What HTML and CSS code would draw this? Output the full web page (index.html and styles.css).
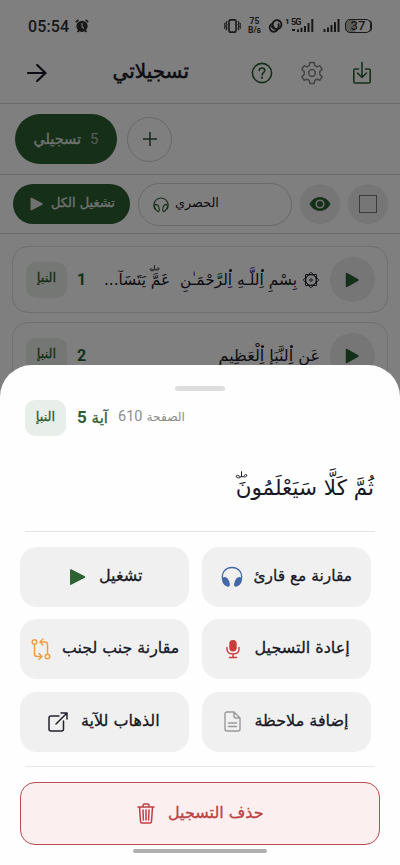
FILE: index.html
```html
<!DOCTYPE html>
<html lang="ar">
<head>
<meta charset="utf-8">
<meta name="viewport" content="width=device-width, initial-scale=1">
<title>تسجيلاتي</title>
<link rel="stylesheet" href="styles.css">
</head>
<body>
<div class="phone">
  <div class="status">
    <span class="clock">05:54</span>
    <svg class="alarm" width="14" height="14" viewBox="0 0 14 14"><circle cx="7" cy="7.300" r="5.600" fill="#303030"/><path d="M.8 3.200 3.400.9M13.200 3.200 10.600.9M2.500 13l1.600-1.800M11.500 13l-1.600-1.800" stroke="#303030" stroke-width="1.700"/><path d="M7 4v3.600l2 1.800" fill="none" stroke="#ddd" stroke-width="1.300"/></svg>
    <svg class="vibrate" width="17" height="14" viewBox="0 0 17 14" fill="none" stroke="#303030"><rect x="5" y=".9" width="7" height="12.200" rx="1.400" stroke-width="1.600"/><path d="M3 2 2 4l1 1.700L2 7.400l1 1.800-1 2M.8 4v6M14 2l1 2-1 1.700 1 1.700-1 1.800 1 2M16.200 4v6" stroke-width="1.100"/></svg>
    <span class="speed"><b>75</b><b>B/s</b></span>
    <svg class="link" width="17" height="14" viewBox="0 0 17 14" fill="none" stroke="#303030" stroke-width="1.900" stroke-linecap="round"><path d="M5.500 4.600a4.200 4.200 0 1 0 4.800 6.400"/><path d="M7 8.800a4.400 4.400 0 1 1 4.200 1C8.500 10.500 5.500 9.500 5 7.500"/><path d="M11.600 5.200c.6 3-.8 5-2.600 6"/></svg>
    <span class="sim">1</span>
    <span class="net"><b>5G</b><svg width="23" height="14" viewBox="0 0 23 14" fill="#303030"><path d="M1 10h3v2H1zM6 10.500h2V13H6zM9.500 8.800h2V13h-2zM13 7h2v6h-2zM16.500 4h2v9h-2zM20.300 0h2v13h-2z"/></svg></span>
    <svg class="signal" width="17" height="14" viewBox="0 0 17 14" fill="#303030"><path d="M.5 10h2v3h-2zM4 8.500h2V13H4zM7.500 6h2v7h-2zM11 3.200h2V13h-2zM14.500 0h2v13h-2z"/></svg>
    <span class="battery">37</span>
  </div>
  <div class="header">
    <svg class="back" width="20" height="20" viewBox="0 0 20 20" fill="none" stroke="#181825" stroke-width="2.200" stroke-linecap="round" stroke-linejoin="round"><path d="M1 10h17.500M10.200 2l8.300 8-8.300 8"/></svg>
    <h1 dir="rtl">تسجيلاتي</h1>
    <svg class="help" width="22" height="22" viewBox="0 0 22 22" fill="none" stroke="#2d5f33" stroke-width="1.600" stroke-linecap="round"><circle cx="11" cy="11" r="9.600"/><path d="M8.200 8.400C8.300 6.700 9.500 6 11 6s2.800.9 2.800 2.500c0 2-2.700 2.200-2.700 4.500"/><circle cx="11" cy="15.800" r=".4"/></svg>
    <svg class="gear" width="24" height="24" viewBox="0 0 24 24" fill="none" stroke="#888" stroke-width="1.500" stroke-linejoin="round"><circle cx="12" cy="12" r="3.400"/><path d="M9.900 1.500h4.200l.6 3 2.300 1.300 3-1 2.100 3.600-2.300 2.100v3l2.300 2.100-2.100 3.600-3-1-2.300 1.300-.6 3H9.900l-.6-3L7 18.200l-3 1-2.100-3.600 2.300-2.100v-3L1.900 8.400 4 4.800l3 1 2.300-1.300z"/></svg>
    <svg class="save" width="20" height="24" viewBox="0 0 20 24" fill="none" stroke="#2d5f33" stroke-width="1.600" stroke-linecap="round" stroke-linejoin="round"><path d="M6.500 8H3.300Q1.800 8 1.800 9.500v11q0 1.500 1.500 1.500h13.400q1.500 0 1.500-1.500v-11Q18.200 8 16.700 8h-3.200M10 1.500v15M5.500 12l4.500 4.500 4.500-4.500"/></svg>
  </div>
  <div class="tabs">
    <div class="tab"><span class="name" dir="rtl">تسجيلي</span><span class="count">5</span></div>
    <div class="add"><svg width="16" height="16" viewBox="0 0 16 16" stroke="#2d4a35" stroke-width="1.500"><path d="M8 1v14M1 8h14"/></svg></div>
  </div>
  <div class="tools">
    <div class="playall"><svg width="13" height="14" viewBox="0 0 13 14"><path d="M1.300 1.300v11.400L12 7z" fill="#dfe5df" stroke="#dfe5df" stroke-width="1.500" stroke-linejoin="round"/></svg><span class="semi" dir="rtl">تشغيل الكل</span></div>
    <div class="reciter"><svg width="16" height="17" viewBox="0 0 16 17" fill="none" stroke="#2d5f33" stroke-width="1.100"><path d="M2.200 13.500A7.200 7.200 0 1 1 13.800 13.500"/><path d="M2.200 8.500C.3 10.500 3 15 5.200 15.600 7.700 15 5.600 7.300 2.200 8.500zM13.800 8.500c1.900 2-.8 6.500-3 7.100-2.500-.6-.4-8.300 3-7.100z"/></svg><span dir="rtl">الحصري</span></div>
    <div class="round"><svg width="22" height="16" viewBox="0 0 22 16"><path d="M.5 8Q4.200 1 11 1t10.500 7Q17.800 15 11 15T.5 8z" fill="#2d5f33"/><circle cx="11" cy="8" r="3.800" fill="#2d5f33" stroke="#ddd" stroke-width="1.600"/></svg></div>
    <div class="round"><span class="check"></span></div>
  </div>
  <div class="list">
    <div class="card"><span class="badge semi" dir="rtl">النبإ</span><b class="num">1</b><span class="ayah first" dir="rtl">بِسْمِ اِ<i class="dot"></i>للَّـهِ اِ<i class="dot"></i>لرَّحْمَـٰنِ&nbsp; عَمَّ<i class="waqf"><svg width="11" height="8" viewBox="0 0 12 8"><path d="M11 4.500C10 3 8.500 5 7.500 6c1.500.6 3.500.2 3.500-1.500M7.500 6H6V1M6 6Q4.500 6.500 4 5.500 2 4 1 5.500 1 7.500 5 7"/></svg></i> يَتَسَآ...</span><svg class="rub" width="18" height="18" viewBox="0 0 18 18" fill="none" stroke="#181825" stroke-width=".9"><path d="M3.500 3.500h11v11h-11zM9 1.200l7.800 7.800L9 16.800 1.200 9z"/><circle cx="9" cy="9" r="5.300" fill="#fefefe"/><circle cx="9" cy="9" r="1.300"/></svg><div class="play"><svg width="14" height="16" viewBox="0 0 14 16"><path d="M1.500 1.500v13L13 8z" fill="#2d5f33" stroke="#2d5f33" stroke-width="1.500" stroke-linejoin="round"/></svg></div></div>
    <div class="card"><span class="badge semi" dir="rtl">النبإ</span><b class="num">2</b><span class="ayah second" dir="rtl">عَنِ اِ<i class="dot"></i>لنَّبَإِ اِ<i class="dot"></i>لْعَظِيمِ</span><div class="play"><svg width="14" height="16" viewBox="0 0 14 16"><path d="M1.500 1.500v13L13 8z" fill="#2d5f33" stroke="#2d5f33" stroke-width="1.500" stroke-linejoin="round"/></svg></div></div>
  </div>
  <div class="scrim"></div>
  <div class="sheet">
    <div class="handle"></div>
    <div class="meta"><span class="badge semi" dir="rtl">النبإ</span><span class="aya semi" dir="rtl">آية <b>5</b></span><span class="page" dir="rtl">الصفحة <b>610</b></span></div>
    <div class="verse" dir="rtl"><span>ثُمَّ كَلَّا سَيَعْلَمُونَ<i class="waqf big"><svg width="13" height="9" viewBox="0 0 12 8"><path d="M11 4.500C10 3 8.500 5 7.500 6c1.500.6 3.500.2 3.500-1.500M7.500 6H6V1M6 6Q4.500 6.500 4 5.500 2 4 1 5.500 1 7.500 5 7"/></svg></i></span></div>
    <div class="actions">
      <div class="btn b1"><svg width="17" height="18" viewBox="0 0 17 18"><path d="M1.800 1.800v14.400L15.500 9z" fill="#2d6233" stroke="#2d6233" stroke-width="1.500" stroke-linejoin="round"/></svg><span dir="rtl">تشغيل</span></div>
      <div class="btn b2"><svg width="22" height="22" viewBox="0 0 22 22"><path d="M2 14.500C-.5 7 4.500 1.500 11 1.500S22.500 7 20 14.500" fill="none" stroke="#4468a5" stroke-width="1.300"/><path d="M1.300 12c2-2 4.700-1 6 1.500 1.300 2.600 2.500 6.300.7 7-2.500.9-8-3-6.700-8.500zM20.700 12c-2-2-4.700-1-6 1.500-1.300 2.600-2.500 6.300-.7 7 2.500.9 8-3 6.700-8.500z" fill="#4468a5"/></svg><span dir="rtl">مقارنة مع قارئ</span></div>
      <div class="btn b3"><svg width="20" height="22" viewBox="0 0 20 22" fill="none" stroke="#eaa04a" stroke-width="1.500" stroke-linecap="round" stroke-linejoin="round"><circle cx="3.500" cy="4" r="2.300"/><circle cx="16.500" cy="18.500" r="2.300"/><path d="M3.500 6.500V16q0 2.500 2.500 2.500h4.500M8 15.500l3 3-3 3M16.500 16V6.500Q16.500 4 14 4H9.500M12 1 9 4l3 3"/></svg><span dir="rtl">مقارنة جنب لجنب</span></div>
      <div class="btn b4"><svg width="14" height="20" viewBox="0 0 14 20"><rect x="3.300" y="1" width="7.400" height="11.500" rx="3.700" fill="#c93c38"/><path d="M1 8.500V10q0 5 6 5t6-5V8.500M7 15v3.500M3.500 18.500h7" fill="none" stroke="#c93c38" stroke-width="1.400" stroke-linecap="round"/></svg><span dir="rtl">إعادة التسجيل</span></div>
      <div class="btn b5"><svg width="20" height="20" viewBox="0 0 20 20" fill="none" stroke="#22222c" stroke-width="1.500" stroke-linecap="round" stroke-linejoin="round"><path d="M11 4H3Q1 4 1 6v11q0 2 2 2h10.500q2 0 2-2V9M8 12 19 1M13 1h6v6"/></svg><span dir="rtl">الذهاب للآية</span></div>
      <div class="btn b6"><svg width="17" height="21" viewBox="0 0 17 21" fill="none" stroke="#999" stroke-width="1.400" stroke-linecap="round" stroke-linejoin="round"><path d="M10 1H3Q1 1 1 3v15q0 2 2 2h11q2 0 2-2V7zM10 1v4q0 2 2 2h4M4.500 12h8M4.500 15.500h8"/></svg><span dir="rtl">إضافة ملاحظة</span></div>
    </div>
    <div class="delete"><svg width="18" height="21" viewBox="0 0 18 21" fill="none" stroke="#bd4141" stroke-width="1.500" stroke-linecap="round" stroke-linejoin="round"><path d="M1 4h16M6 3.800V2.500Q6 1 7.500 1h3Q12 1 12 2.500v1.300M2.500 4l1 14.500q.1 1.500 1.500 1.500h8q1.400 0 1.500-1.500L15.500 4M6 7l.4 10M9 7v10M12 7l-.4 10"/></svg><span dir="rtl">حذف التسجيل</span></div>
    <div class="navbar"></div>
  </div>
</div>
</body>
</html>
```

FILE: styles.css
```css
* { box-sizing: border-box; }
body { margin: 0; background: #fff; font-family: "DejaVu Sans", sans-serif; color: #181825; }
svg { flex: none; display: block; }
span { white-space: nowrap; flex: none; }
.phone { position: relative; width: 400px; height: 865px; overflow: hidden; background: #fefefe; }
.status { display: flex; align-items: center; height: 52px; padding: 0 0 0 28px; font-family: Roboto, sans-serif; color: #303030; }
.clock { font-size: 16px; font-weight: 500; width: 41px; letter-spacing: .1px; }
.alarm { margin-left: 6px; }
.vibrate { margin-left: 135px; }
.speed { display: flex; flex-direction: column; align-items: center; width: 15px; margin-left: 6px; font-size: 8.500px; line-height: 9px; }
.link { margin-left: 5px; }
.sim { font-size: 8px; font-weight: 700; margin: -10px 0 0 1px; width: 5px; }
.net { position: relative; margin-left: 1px; }
.net b { position: absolute; left: 0; top: -2px; font-size: 9px; line-height: 10px; letter-spacing: -.8px; }
.signal { margin-left: 9px; }
.battery { width: 26px; height: 14px; margin-left: 5px; border: 1.500px solid #303030; border-radius: 5px; background: linear-gradient(90deg, #bbb 37%, #fff 37%); font: 500 13px/12px Roboto, sans-serif; text-align: center; box-shadow: 2px 0 0 -1px #303030; }
.header { display: flex; align-items: center; height: 52px; padding-bottom: 10px; border-bottom: 1px solid #d6d6d6; }
.back { margin-left: 27px; flex: none; }
h1 { flex: none; margin: -4px 0 0 64px; width: 78px; font-size: 20px; line-height: 30px; font-weight: 400; white-space: nowrap; -webkit-text-stroke: .5px; }
.help { margin-left: 62px; }
.gear { margin-left: 27px; }
.save { margin-left: 28px; }
.tabs { display: flex; align-items: center; height: 71px; gap: 10px; padding-left: 15px; border-bottom: 1px solid #d6d6d6; }
.tab { display: flex; align-items: center; width: 102px; height: 50px; padding-left: 19px; border-radius: 25px; background: #2d5f33; color: #dfe5df; }
.tab .name { width: 47px; font-size: 14.500px; -webkit-text-stroke: .3px; }
.tab .count { margin-left: 9px; font: 15px Roboto, sans-serif; color: #a5b8a8; }
.add { display: flex; align-items: center; justify-content: center; width: 45px; height: 45px; border: 1px solid #d2d2d2; border-radius: 50%; }
.semi { -webkit-text-stroke: .3px; }
.tools { display: flex; align-items: center; height: 59px; padding-left: 13px; border-bottom: 1px solid #d6d6d6; }
.playall { display: flex; align-items: center; width: 117px; height: 40px; padding-left: 17px; gap: 8px; border-radius: 20px; background: #2d5f33; color: #dfe5df; font-size: 13px; }
.playall span, .reciter span { margin-top: -3px; }
.reciter { display: flex; align-items: center; width: 154px; height: 43px; margin-left: 8px; padding-left: 14px; gap: 6px; border: 1px solid #d2d2d2; border-radius: 22px; font-size: 12.800px; }
.round { display: flex; align-items: center; justify-content: center; width: 40px; height: 40px; margin-left: 8px; border-radius: 50%; background: #ececec; }
.check { width: 18px; height: 18px; border: 1.500px solid #777; }
.list { display: flex; flex-direction: column; gap: 9px; padding: 12px 12px; }
.card { display: flex; align-items: center; height: 67px; padding: 0 12px 0 13px; border: 1px solid #dedede; border-radius: 16px; }
.badge { display: flex; align-items: center; justify-content: center; width: 41px; height: 36px; padding-bottom: 4px; border-radius: 10px; background: #e8eee9; color: #2d5f33; font-size: 13px; flex: none; }
.num { margin-left: 10px; font: 700 16px Roboto, sans-serif; color: #2d5f33; flex: none; }
.ayah { margin-left: auto; font-size: 16px; }
.first { font-size: 15.400px; }
.dot { display: inline-block; position: relative; width: 0; height: 1px; }
.dot::before { content: ""; position: absolute; left: 1px; bottom: 13px; width: 3px; height: 3px; border-radius: 50%; background: #181825; }
.waqf { display: inline-block; position: relative; width: 0; height: 1px; }
.waqf svg { position: absolute; left: -2px; bottom: 13px; fill: none; stroke: #181825; stroke-width: .9; }
.waqf.big svg { left: -1px; bottom: 16px; }
.rub { margin: 0 0 0 5px; }
.play { display: flex; flex: none; align-items: center; justify-content: center; width: 45px; height: 45px; margin-left: 10px; padding-right: 1px; border-radius: 50%; background: #ececec; }
.scrim { position: absolute; inset: 0; background: rgba(0, 0, 0, .5); }
.sheet { position: absolute; left: 0; right: 0; top: 365px; height: 500px; border-radius: 32px 32px 0 0; background: #fefefe; padding-top: 21px; }
.handle { width: 50px; height: 5px; margin: 0 auto; border-radius: 3px; background: #ddd; }
.meta { display: flex; align-items: center; height: 36px; margin: 9px 0 0 25px; }
.aya { width: 32px; margin: -3px 0 0 10px; font-size: 15px; color: #2d5f33; }
.aya b { font: 700 17px Roboto, sans-serif; -webkit-text-stroke: 0; }
.page { width: 66px; margin: -3px 0 0 11px; font-size: 12.300px; color: #8d8d8d; }
.page b { font: 400 14.500px Roboto, sans-serif; }
.verse { display: flex; align-items: center; height: 96px; margin: 0 25px; padding: 7px 1px 0; border-bottom: 1px solid #e3e3e3; font-size: 21.500px; }
.actions { display: grid; grid-template-columns: 169px 169px; grid-auto-rows: 60px; gap: 12.300px 12.500px; margin: 0 25px 0 20px; padding: 15px 0; }
.btn { display: flex; align-items: center; border-radius: 17px; background: #f0f0f0; font-size: 16px; -webkit-text-stroke: .3px; }
.btn span, .delete span { margin-top: -3px; }
.b1 { padding-left: 49px; gap: 13px; }
.b2 { padding-left: 19px; gap: 11px; font-size: 15.400px; }
.b3 { padding-left: 11px; gap: 11px; font-size: 15.800px; }
.b4 { padding-left: 24px; gap: 15px; }
.b5 { padding-left: 28px; gap: 13px; }
.b6 { padding-left: 22px; gap: 14px; }
.delete { display: flex; align-items: center; padding-left: 116px; gap: 13px; position: relative; height: 63px; margin: 15.500px 20px 0; border: 1.500px solid #b84a50; border-radius: 15px; background: #fbefef; color: #bd4141; font-size: 16px; -webkit-text-stroke: .3px; }
.delete::before { content: ""; position: absolute; top: -17px; left: 4px; right: 4px; height: 1px; background: #e8e8e8; }
.navbar { width: 134px; height: 4px; margin: 4px auto 0; border-radius: 2px; background: #b0b0b0; }
```
